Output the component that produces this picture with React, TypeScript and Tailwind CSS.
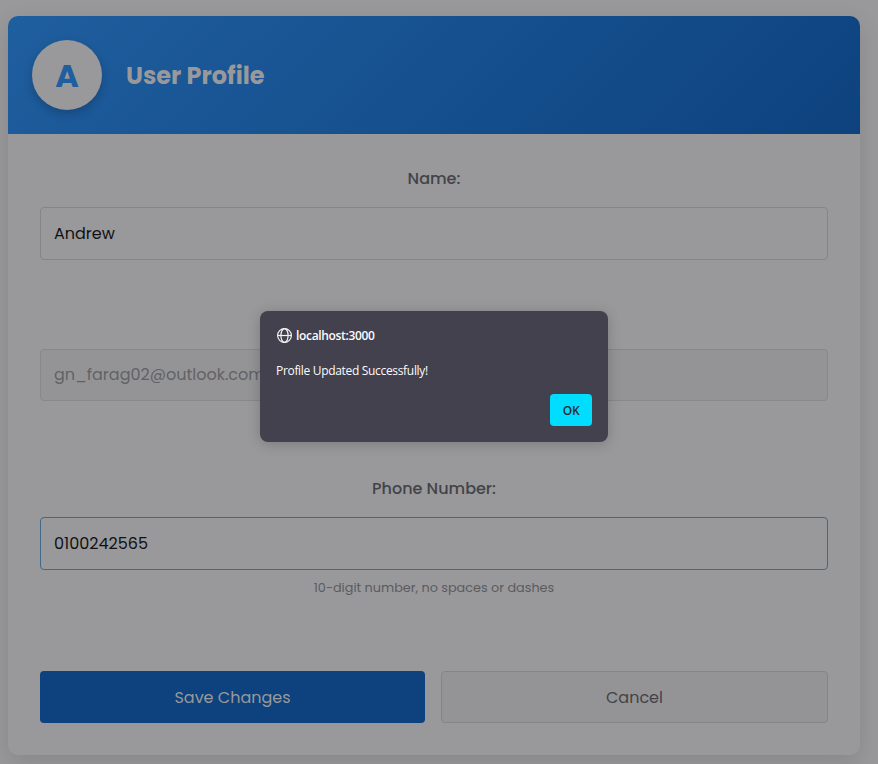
import React from "react";

const label = "h-6 text-center text-[16px] font-medium leading-6 text-[#434347]";

function GlobeIcon() {
  return (
    <svg width="16" height="16" viewBox="0 0 16 16" fill="none" stroke="#f3f3f6" strokeWidth="1.2">
      <circle cx="8.5" cy="8.5" r="6.9" />
      <ellipse cx="8.5" cy="8.5" rx="3.6" ry="6.9" />
      <path d="M1.6 8.5h13.8" />
    </svg>
  );
}

export default function App() {
  return (
    <div className="relative h-[764px] w-[878px] overflow-hidden bg-[#99999b] pl-2 pt-4 font-[Poppins,Inter,sans-serif]">
      <main className="flex h-[739px] w-[852px] flex-col overflow-hidden rounded-[10px] bg-[#99999b] shadow-[0_8px_24px_rgba(0,0,0,0.12)]">
        <header className="flex h-[118px] shrink-0 items-center gap-6 bg-[linear-gradient(135deg,#1f5e9f_0%,#0d427e_100%)] px-6">
          <div className="flex size-[70px] items-center justify-center rounded-full bg-[#99999b] shadow-[0_4px_10px_rgba(0,0,0,0.2)]">
            <span className="pt-px text-[32px] font-bold leading-none text-[#1f5e9f]">A</span>
          </div>
          <h1 className="pt-0.5 text-[24px] font-bold text-[#99999b]">User Profile</h1>
        </header>
        <form className="flex flex-col px-8 pt-[33px]">
          <label className={label}>Name:</label>
          <div className="mt-[16px] flex h-[53px] items-center rounded-[4px] border border-[#858588] px-[13px] text-[16px] text-[#111115]"><span>Andrew</span></div>
          <label className={label + " mt-[49px]"}>Email:</label>
          <div className="mt-[16px] flex h-[52px] items-center rounded-[4px] border border-[#88888a] bg-[#949496] px-[13px] text-[16px] text-[#626265]"><span>gn_farag02@outlook.com</span></div>
          <label className={label + " mt-[76px]"}>Phone Number:</label>
          <div className="mt-[16px] flex h-[53px] items-center rounded-[4px] border border-[#416988] px-[13px] text-[16px] text-[#111115]"><span>0100242565</span></div>
          <p className="mt-2 h-5 text-center text-[12.8px] leading-5 text-[#5b5b60]">10-digit number, no spaces or dashes</p>
          <div className="mt-[73px] flex gap-4">
            <button type="button" className="h-[52px] w-[385px] rounded-[4px] bg-[#0d427e] pt-0.5 text-[16px] text-[#99999b]">Save Changes</button>
            <button type="button" className="h-[52px] w-[387px] rounded-[4px] border border-[#858588] bg-[#949496] pt-0.5 text-[16px] text-[#434347]">Cancel</button>
          </div>
        </form>
      </main>
      <div role="dialog" className="absolute left-[260px] top-[311px] flex h-[131px] w-[348px] flex-col rounded-[8px] bg-[#42414d] px-4 pt-4 font-['Open_Sans',sans-serif] text-[12px] text-[#fbfbfe] shadow-[0_2px_14px_rgba(0,0,0,0.2)]">
        <div className="flex h-4 items-center gap-1 font-semibold"><GlobeIcon /><span className="pt-0.5 tracking-[-0.33px]">localhost:3000</span></div>
        <p className="mt-[20px] h-4 leading-4 tracking-[-0.32px]">Profile Updated Successfully!</p>
        <button type="button" className="mt-[15px] h-8 w-[42px] self-end rounded-[4px] bg-[#00ddff] pt-0.5 font-semibold tracking-[-0.2px] text-[#2b2a33]">OK</button>
      </div>
    </div>
  );
}
